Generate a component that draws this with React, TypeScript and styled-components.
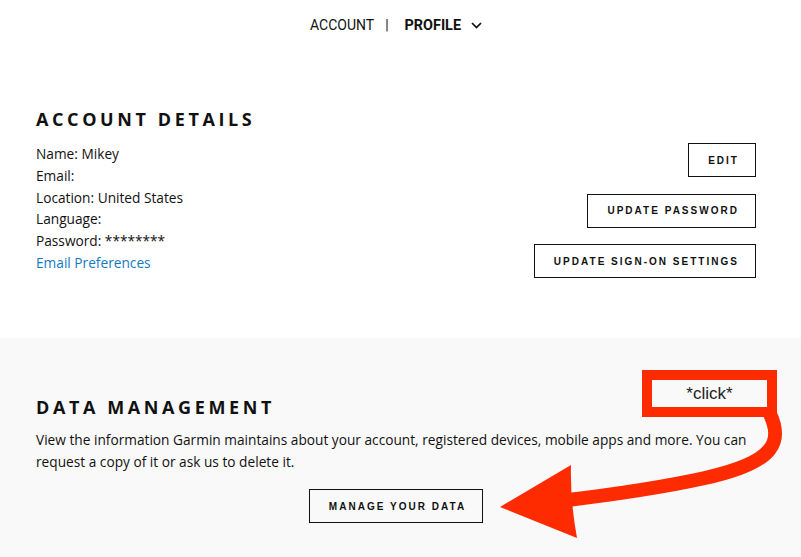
import React from "react";
import styled, { createGlobalStyle } from "styled-components";

const Global = createGlobalStyle`
  html, body { margin: 0; padding: 0; background: #fff; }
  body { font-family: "Open Sans", "Liberation Sans", sans-serif; color: #111; }
  * { box-sizing: border-box; }
`;

const Page = styled.div`
  position: relative;
  width: 801px;
  height: 557px;
  overflow: hidden;
  display: flex;
  flex-direction: column;
`;

const Nav = styled.nav`
  height: 50px;
  padding: 0 45px 0 36px;
  display: flex;
  align-items: center;
  justify-content: center;
  font-family: Roboto, "Liberation Sans", sans-serif;
  font-size: 14px;
  color: #111;
`;

const NavItem = styled.span<{ $active?: boolean }>`
  font-weight: ${(p) => (p.$active ? 700 : 400)};
  font-size: ${(p) => (p.$active ? "14.4px" : "14px")};
`;

const NavSep = styled.span`
  margin: 0 16px 0 11px;
`;

const Chevron = styled.svg`
  margin-left: 10px;
  width: 11px;
  height: 7px;
`;

const Section = styled.section<{ $grey?: boolean }>`
  background: ${(p) => (p.$grey ? "#f9f9f9" : "#fff")};
  padding: 57px 45px ${(p) => (p.$grey ? "0" : "60px")} 36px;
  flex: ${(p) => (p.$grey ? 1 : "none")};
`;

const Heading = styled.h2`
  margin: 0;
  font-size: 18px;
  line-height: 24px;
  font-weight: 700;
  letter-spacing: 3.6px;
  text-transform: uppercase;
`;

const DetailsRow = styled.div`
  margin-top: 12px;
  display: flex;
  justify-content: space-between;
  align-items: flex-start;
`;

const DetailList = styled.div`
  display: flex;
  flex-direction: column;
  font-size: 13.7px;
  line-height: 21.8px;
`;

const Link = styled.a`
  color: #1479bf;
  text-decoration: none;
`;

const ButtonCol = styled.div`
  display: flex;
  flex-direction: column;
  align-items: flex-end;
  gap: 16.5px;
`;

const OutlineButton = styled.button`
  height: 34px;
  padding: 0 16px 0 19px;
  border: 1px solid #111;
  background: transparent;
  font-family: "Liberation Sans", Arial, sans-serif;
  font-size: 10px;
  font-weight: 700;
  letter-spacing: 2.02px;
  color: #111;
  text-transform: uppercase;
  cursor: pointer;
`;

const Para = styled.p`
  margin: 10px 0 0;
  font-size: 13.7px;
  line-height: 22px;
`;

const Center = styled.div`
  margin-top: 16px;
  display: flex;
  justify-content: center;
`;

const ClickBox = styled.div`
  position: absolute;
  left: 642px;
  top: 370px;
  width: 135px;
  height: 47px;
  border: 10px solid #fe2a00;
  background: #f9f9f9;
  display: flex;
  align-items: center;
  justify-content: center;
  font-family: "Liberation Sans", Arial, sans-serif;
  font-size: 17px;
  color: #222;
`;

const Overlay = styled.svg`
  position: absolute;
  left: 0;
  top: 0;
  pointer-events: none;
`;

export default function App() {
  return (
    <Page>
      <Global />
      <Nav>
        <NavItem>ACCOUNT</NavItem>
        <NavSep>|</NavSep>
        <NavItem $active>PROFILE</NavItem>
        <Chevron viewBox="0 0 11 7">
          <polyline points="1,1 5.5,5.5 10,1" fill="none" stroke="#111" strokeWidth="1.7" />
        </Chevron>
      </Nav>
      <Section>
        <Heading>Account Details</Heading>
        <DetailsRow>
          <DetailList>
            <span>Name: Mikey</span>
            <span>Email:</span>
            <span>Location: United States</span>
            <span>Language:</span>
            <span>Password: ********</span>
            <Link href="#">Email Preferences</Link>
          </DetailList>
          <ButtonCol>
            <OutlineButton>Edit</OutlineButton>
            <OutlineButton>Update Password</OutlineButton>
            <OutlineButton>Update Sign-On Settings</OutlineButton>
          </ButtonCol>
        </DetailsRow>
      </Section>
      <Section $grey>
        <Heading>Data Management</Heading>
        <Para>
          View the information Garmin maintains about your account, registered devices, mobile apps and more. You can
          request a copy of it or ask us to delete it.
        </Para>
        <Center>
          <OutlineButton>Manage Your Data</OutlineButton>
        </Center>
      </Section>
      <ClickBox>*click*</ClickBox>
      <Overlay width="801" height="557" viewBox="0 0 801 557">
        <path
          d="M 770 414 C 782 440, 778 462, 705 478 C 660 488, 610 495, 560 501"
          fill="none"
          stroke="#fe2a00"
          strokeWidth="14"
        />
        <path d="M 500 507 L 571 465 Q 570 500 577 538 Z" fill="#fe2a00" />
      </Overlay>
    </Page>
  );
}
